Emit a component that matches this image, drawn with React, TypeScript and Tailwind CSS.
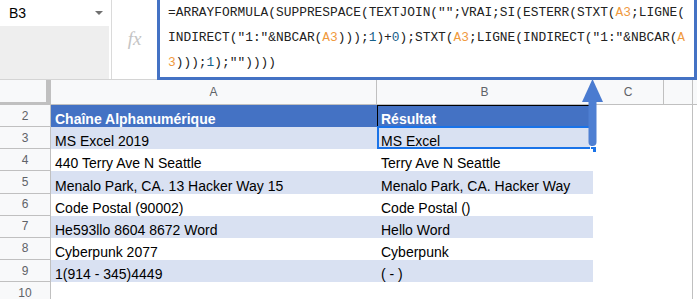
const rows: [string, string][] = [
  ['MS Excel 2019', 'MS Excel'],
  ['440 Terry Ave N Seattle', 'Terry Ave N Seattle'],
  ['Menalo Park, CA. 13 Hacker Way 15', 'Menalo Park, CA. Hacker Way'],
  ['Code Postal (90002)', 'Code Postal ()'],
  ['He593llo 8604 8672 Word', 'Hello Word'],
  ['Cyberpunk 2077', 'Cyberpunk'],
  ['1(914 - 345)4449', '( - )'],
];

const Ref = ({ children }: { children: React.ReactNode }) => <span className="text-[#f09a3e]">{children}</span>;
const Num = ({ children }: { children: React.ReactNode }) => <span className="text-[#17608a]">{children}</span>;

const App = () => {
  return (
    <div className="relative h-[299px] w-[697px] overflow-hidden bg-white font-['Liberation_Sans',Arial,sans-serif]">
      {/* Formula bar */}
      <div className="flex h-[80px]">
        <div className="flex w-[157px] border-b border-[#d4d4d4]">
          <div className="flex w-[112px] flex-col border-r border-[#dadada]">
            <div className="flex h-[26px] items-center justify-between pl-[9px] pr-[8px] text-[14px] text-black">
              <span>B3</span>
              <span className="h-0 w-0 border-x-[4px] border-t-[4px] border-x-transparent border-t-[#707070]" />
            </div>
            <div className="flex-1 border-r-[2px] border-white bg-[#eeeeee]" />
          </div>
          <div className="flex flex-1 items-center justify-center pb-[1px] font-['Liberation_Serif',serif] text-[19px] italic text-[#c4c4c4]">
            fx
          </div>
        </div>
        <div className="flex-1 border-x-[3px] border-b-[3px] border-[#4472c4] pl-[8px] font-['Liberation_Mono',monospace] text-[12.87px] leading-[25px] whitespace-pre text-[#222]">
          <div>
            =ARRAYFORMULA(SUPPRESPACE(TEXTJOIN("";VRAI;SI(ESTERR(STXT(<Ref>A3</Ref>;LIGNE(
          </div>
          <div>
            INDIRECT("1:"&amp;NBCAR(<Ref>A3</Ref>)));<Num>1</Num>)+<Num>0</Num>);STXT(<Ref>A3</Ref>;LIGNE(INDIRECT("1:"&amp;NBCAR(<Ref>A</Ref>
          </div>
          <div>
            <Ref>3</Ref>)));<Num>1</Num>);""))))
          </div>
        </div>
      </div>

      {/* Column headers */}
      <div className="flex h-[25px] bg-[#f8f9fa] text-[12px] text-[#5f6368]">
        <div className="w-[51px] border-r-[5px] border-b-[3px] border-[#c0c0c0]" />
        <div className="flex w-[326px] items-center justify-center border-r border-b border-[#c0c0c0]">A</div>
        <div className="flex w-[216px] items-center justify-center border-r border-b border-[#c0c0c0]">B</div>
        <div className="flex w-[71px] items-center justify-center border-r border-b border-[#c0c0c0]">C</div>
        <div className="w-[29px] border-r border-b border-[#c0c0c0]" />
        <div className="flex-1 border-b border-[#c0c0c0]" />
      </div>

      {/* Header row */}
      <div className="flex h-[22.15px] text-[14px]">
        <div className="flex w-[51px] items-center justify-center border-r border-b border-[#c0c0c0] bg-[#f8f9fa] text-[12px] text-[#5f6368]">
          2
        </div>
        <div className="flex w-[326px] items-end bg-[#4472c4] pl-[4px] font-bold leading-[16px] text-white">
          Chaîne Alphanumérique
        </div>
        <div className="flex w-[216px] items-end border-l border-t border-black bg-[#4472c4] pl-[3px] font-bold leading-[16px] text-white">
          Résultat
        </div>
        <div className="w-[100px] border-r border-[#c0c0c0]" />
      </div>

      {/* Data rows */}
      {rows.map(([a, b], i) => {
        const fill = i % 2 === 0 ? 'bg-[#d9e1f2]' : 'bg-white';
        return (
          <div key={i} className="flex h-[22.15px] text-[14px] text-black">
            <div className="flex w-[51px] items-center justify-center border-r border-b border-[#c0c0c0] bg-[#f8f9fa] text-[12px] text-[#5f6368]">
              {i + 3}
            </div>
            <div className={`flex w-[326px] items-end pl-[4px] leading-[16px] ${fill}`}>{a}</div>
            <div className={`relative flex w-[216px] items-end pl-[4px] leading-[16px] ${fill}`}>
              {b}
              {i === 0 && (
                <>
                  <div className="absolute -top-[1px] left-0 right-0 bottom-0 border-2 border-[#1a73e8]" />
                  <div className="absolute -bottom-[4px] -right-[4px] h-[7px] w-[7px] border border-white bg-[#1a73e8]" />
                </>
              )}
            </div>
            <div className="w-[100px] border-r border-[#c0c0c0]" />
          </div>
        );
      })}

      {/* Row 10 */}
      <div className="flex h-[22px]">
        <div className="flex w-[51px] items-center justify-center border-r border-[#c0c0c0] bg-[#f8f9fa] text-[12px] text-[#5f6368]">
          10
        </div>
        <div className="w-[542px]" />
        <div className="w-[100px] border-r border-[#c0c0c0]" />
      </div>

      {/* Arrow from B3 to the formula bar */}
      <svg className="absolute left-[580px] top-[78px]" width="26" height="72" viewBox="0 0 26 72">
        <path d="M12.5 1 L23 24 L2 24 Z" fill="#4a7bd0" />
        <path d="M8.5 22 H16.5 V64 A4 4 0 0 1 8.5 64 Z" fill="#4e7fd2" />
      </svg>
    </div>
  );
};

export default App;
